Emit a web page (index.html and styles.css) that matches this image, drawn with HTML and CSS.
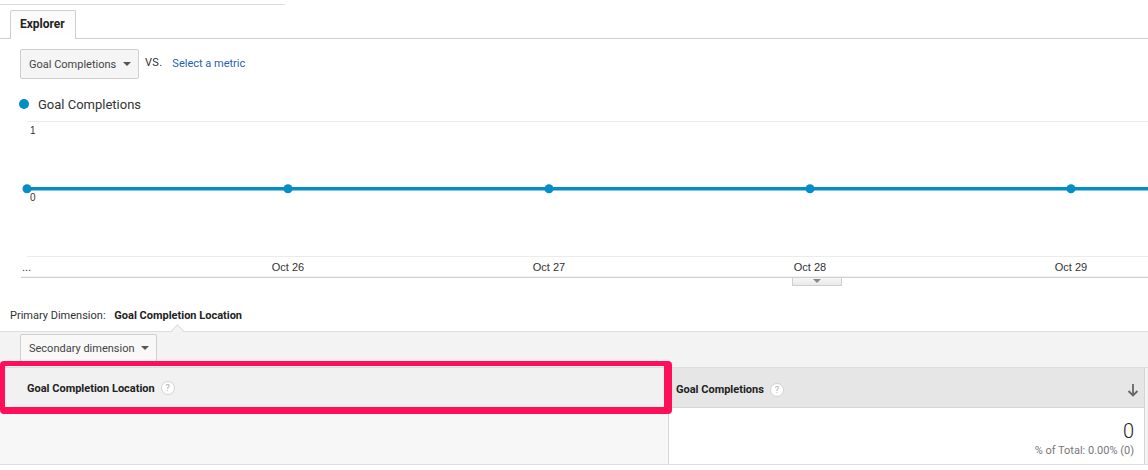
FILE: index.html
```html
<!DOCTYPE html>
<html>
<head>
<meta charset="utf-8">
<link rel="stylesheet" href="styles.css">
</head>
<body>
<div class="topline"></div>
<div class="tabs"><div class="tab">Explorer</div></div>

<div class="controls">
  <div class="dropdown metric">Goal Completions <span class="caret"></span></div>
  <span class="vs">VS.</span>
  <a class="select-metric">Select a metric</a>
</div>

<div class="legend"><span class="dot"></span>Goal Completions</div>

<svg class="chart" width="1148" height="165" viewBox="0 0 1148 165">
  <line x1="27" y1="8.5" x2="1148" y2="8.5" stroke="#ebebeb" stroke-width="1"/>
  <line x1="27" y1="143.5" x2="1148" y2="143.5" stroke="#ebebeb" stroke-width="1"/>
  <text x="30" y="21" class="axis">1</text>
  <text x="30" y="88" class="axis">0</text>
  <line x1="27" y1="75.8" x2="1148" y2="75.8" stroke="#058dc7" stroke-width="3.5"/>
  <circle cx="27" cy="75.8" r="4.5" fill="#058dc7"/>
  <circle cx="288" cy="75.8" r="4.5" fill="#058dc7"/>
  <circle cx="549" cy="75.8" r="4.5" fill="#058dc7"/>
  <circle cx="810" cy="75.8" r="4.5" fill="#058dc7"/>
  <circle cx="1071" cy="75.8" r="4.5" fill="#058dc7"/>
  <text x="22" y="158" class="date">...</text>
  <text x="288" y="158" class="date" text-anchor="middle">Oct 26</text>
  <text x="549" y="158" class="date" text-anchor="middle">Oct 27</text>
  <text x="810" y="158" class="date" text-anchor="middle">Oct 28</text>
  <text x="1071" y="158" class="date" text-anchor="middle">Oct 29</text>
  <line x1="21" y1="164.5" x2="1148" y2="164.5" stroke="#cfcfcf" stroke-width="1.5"/>
</svg>
<div class="chart-toggle"><span class="tri"></span></div>

<div class="primary">Primary Dimension: <b>Goal Completion Location</b></div>

<div class="report">
  <div class="dropdown secondary">Secondary dimension <span class="caret"></span></div>
  <div class="table">
    <div class="thead">
      <div class="th th-left">Goal Completion Location <span class="help">?</span></div>
      <div class="th th-right">Goal Completions <span class="help">?</span>
        <svg class="sort" width="12" height="14" viewBox="0 0 12 14"><path d="M6 1V12.5M1.5 8L6 12.5L10.5 8" fill="none" stroke="#666" stroke-width="1.8"/></svg>
      </div>
    </div>
    <div class="trow">
      <div class="td td-left"></div>
      <div class="td td-right">
        <div class="big">0</div>
        <div class="pct">% of Total: 0.00% (0)</div>
      </div>
    </div>
    <div class="highlight"></div>
  </div>
</div>
</body>
</html>
```

FILE: styles.css
```css
body {
  margin: 0;
  font-family: Roboto, "Liberation Sans", Arial, sans-serif;
  color: #333;
  background: #fff;
  width: 1148px;
  overflow: hidden;
}
.topline {
  margin-top: 4px;
  width: 285px;
  height: 1px;
  background: #dcdcdc;
}
.tabs {
  margin-top: 5px;
  height: 28px;
  border-bottom: 1px solid #cfcfcf;
  padding-left: 10px;
  display: flex;
  align-items: flex-start;
}
.tab {
  position: relative;
  z-index: 1;
  box-sizing: border-box;
  height: 29px;
  width: 66px;
  border: 1px solid #cfcfcf;
  border-bottom: none;
  border-radius: 2px 2px 0 0;
  background: linear-gradient(#fafafa, #fff);
  font-size: 12px;
  font-weight: bold;
  color: #222;
  padding-left: 9px;
  line-height: 27px;
}
.controls {
  margin-top: 10px;
  padding-left: 20px;
  display: flex;
  align-items: flex-start;
  height: 30px;
}
.dropdown {
  box-sizing: border-box;
  border: 1px solid #cfcfcf;
  border-radius: 2px;
  background: #f5f5f5;
  font-size: 11px;
  color: #444;
  display: flex;
  align-items: center;
  padding-left: 8px;
  position: relative;
}
.metric {
  width: 119px;
  height: 30px;
}
.caret {
  position: absolute;
  right: 7px;
  top: 50%;
  margin-top: -2px;
  width: 0;
  height: 0;
  border-left: 4px solid transparent;
  border-right: 4px solid transparent;
  border-top: 4px solid #555;
}
.vs {
  font-size: 11px;
  color: #333;
  margin-left: 6px;
  margin-top: 7px;
  letter-spacing: 0.3px;
}
.select-metric {
  font-size: 11px;
  color: #1f62b3;
  margin-left: 10px;
  margin-top: 8px;
}
.legend {
  margin-top: 16px;
  height: 18px;
  display: flex;
  align-items: center;
  padding-left: 19px;
  font-size: 13px;
  color: #333;
}
.dot {
  width: 10px;
  height: 10px;
  border-radius: 50%;
  background: #058dc7;
  margin-right: 9px;
}
.chart {
  display: block;
}
.chart .axis {
  font-family: "Liberation Sans", Arial, sans-serif;
  font-size: 10px;
  fill: #333;
}
.chart .date {
  font-family: "Liberation Sans", Arial, sans-serif;
  font-size: 11px;
  fill: #333;
}
.chart-toggle {
  box-sizing: border-box;
  margin-left: 792px;
  width: 50px;
  height: 8px;
  border: 1px solid #cfcfcf;
  border-top: none;
  background: linear-gradient(#f7f7f7, #e9e9e9);
  display: flex;
  justify-content: center;
  align-items: flex-start;
}
.tri {
  margin-top: 1px;
  width: 0;
  height: 0;
  border-left: 4px solid transparent;
  border-right: 4px solid transparent;
  border-top: 4px solid #888;
}
.primary {
  margin-top: 15px;
  height: 30px;
  line-height: 30px;
  padding-left: 10px;
  font-size: 11px;
  color: #333;
}
.primary b {
  margin-left: 6px;
  color: #222;
}
.report {
  position: relative;
  border-top: 1px solid #dedede;
  background: #f3f3f3;
  padding-top: 2px;
}
.report::before {
  content: "";
  position: absolute;
  left: 173px;
  top: -6px;
  width: 8px;
  height: 8px;
  background: #f3f3f3;
  border-top: 1px solid #dedede;
  border-left: 1px solid #dedede;
  transform: rotate(45deg);
}
.secondary {
  margin-left: 20px;
  width: 137px;
  height: 28px;
  background: #f8f8f8;
}
.table {
  position: relative;
  margin-top: 5px;
}
.thead {
  display: flex;
  height: 40px;
  border-top: 1px solid #dedede;
  box-sizing: border-box;
}
.th {
  display: flex;
  align-items: center;
  font-size: 11px;
  font-weight: bold;
  color: #222;
}
.th-left {
  width: 668px;
  padding-left: 27px;
  padding-top: 1px;
  box-sizing: border-box;
  background: #f1f1f1;
}
.th-right {
  width: 477px;
  box-sizing: border-box;
  padding-left: 7px;
  padding-top: 4px;
  background: #e6e6e6;
  border-left: 1px solid #d6d6d6;
  border-right: 1px solid #d6d6d6;
  position: relative;
}
.help {
  display: inline-flex;
  align-items: center;
  justify-content: center;
  box-sizing: border-box;
  width: 14px;
  height: 14px;
  border-radius: 50%;
  border: 1px solid #d3d3d3;
  background: #fff;
  color: #aaa;
  font-size: 9px;
  font-weight: normal;
  margin-left: 6px;
}
.sort {
  position: absolute;
  right: 5px;
  top: 15px;
}
.trow {
  display: flex;
  height: 58px;
  border-bottom: 1px solid #dedede;
  box-sizing: border-box;
}
.td-left {
  width: 668px;
  background: #f7f7f7;
}
.td-right {
  width: 477px;
  box-sizing: border-box;
  background: #fff;
  border-left: 1px solid #d6d6d6;
  border-right: 1px solid #d6d6d6;
  border-top: 1px solid #d6d6d6;
  text-align: right;
  padding-right: 10px;
  padding-top: 11px;
}
.big {
  font-size: 20px;
  font-weight: 300;
  color: #222;
  line-height: 24px;
}
.pct {
  font-size: 11px;
  color: #777;
  margin-top: 1px;
}
.highlight {
  position: absolute;
  left: 0;
  top: -6px;
  width: 672px;
  height: 53px;
  box-sizing: border-box;
  border-style: solid;
  border-color: #ff0f5a;
  border-width: 5px 8px 7px 5px;
  border-radius: 4px;
}
```
